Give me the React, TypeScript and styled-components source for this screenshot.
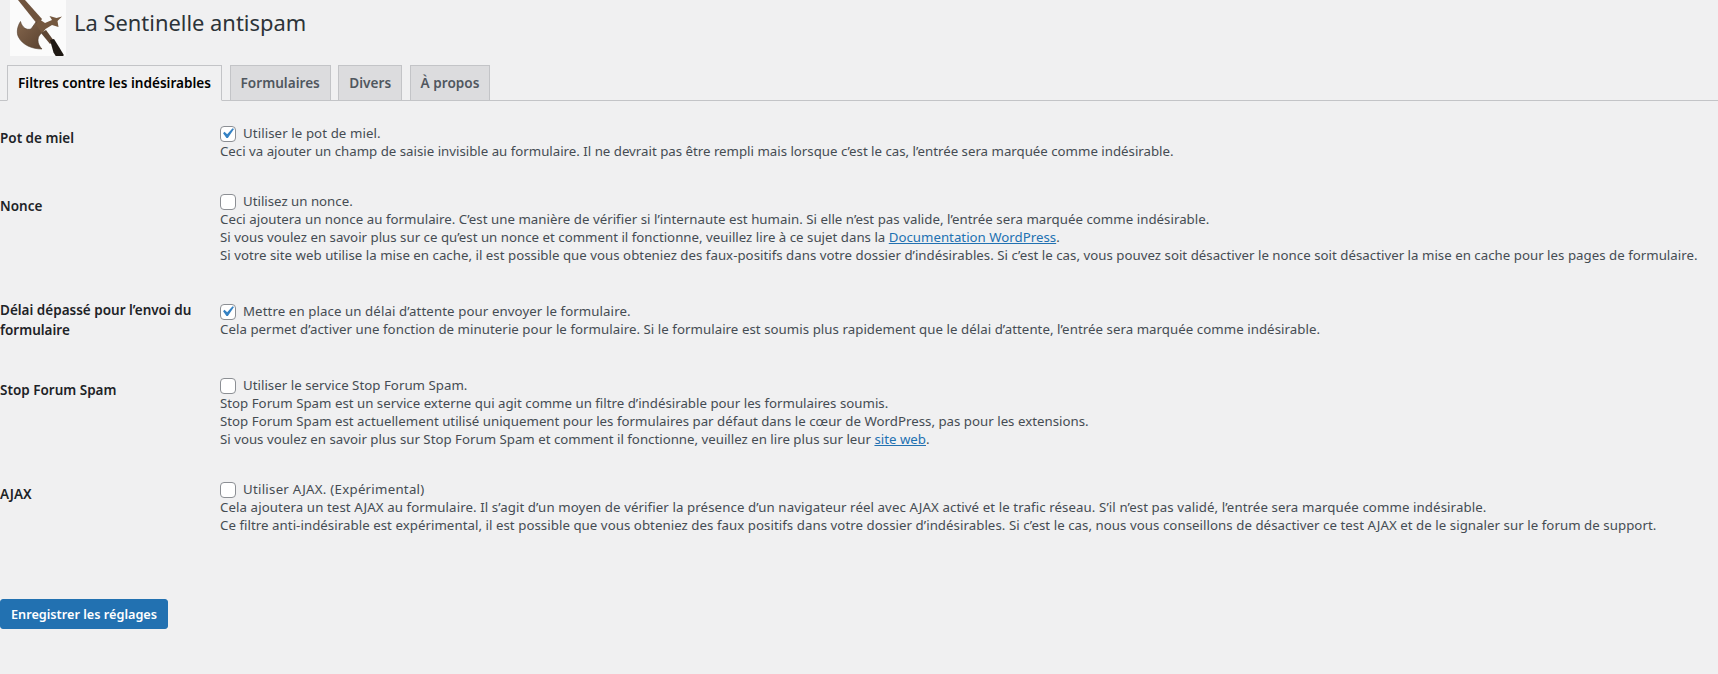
import React from "react";
import styled, { createGlobalStyle } from "styled-components";

const Global = createGlobalStyle`
  html, body { margin: 0; padding: 0; background: #f0f0f1; height: 100%; }
  body { font-family: "Noto Sans", "Open Sans", sans-serif; font-size: 13px; color: #3c434a; overflow: hidden; }
`;
const Page = styled.div`display: flex; flex-direction: column; width: 1718px; height: 674px;`;
const Header = styled.header`display: flex; align-items: flex-start; gap: 8px; padding-left: 10px; height: 65px;`;
const Logo = styled.svg`width: 56px; height: 56px; display: block;`;
const Title = styled.h1`margin: 8px 0 0; font-size: 21.9px; line-height: 30px; font-weight: 400; color: #2c3338;`;
const Tabs = styled.nav`display: flex; gap: 7.5px; padding-left: 7px; height: 35px; border-bottom: 1px solid #c3c4c7;`;
const Tab = styled.a<{ $active?: boolean }>`
  display: block; box-sizing: border-box; height: ${(p) => (p.$active ? 36 : 35)}px; padding: 0 10px; line-height: 34px;
  font-size: 13.6px; font-weight: 600; white-space: nowrap;
  border: 1px solid #c3c4c7; border-bottom: ${(p) => (p.$active ? "1px solid #f0f0f1" : "none")};
  background: ${(p) => (p.$active ? "#f0f0f1" : "#dcdcde")};
  color: ${(p) => (p.$active ? "#000" : "#50575e")};
`;
const Form = styled.form`display: flex; flex-direction: column; padding-top: 7px;`;
const Row = styled.section`display: grid; grid-template-columns: 220px 1fr;`;
const Label = styled.div`padding: 20px 10px 20px 0; font-size: 13.5px; line-height: 20px; font-weight: 600; color: #1d2327; width: 200px;`;
const Cell = styled.div`padding: 15px 0 16px; align-self: center; font-size: 13.25px; line-height: 18px; color: #454c53; white-space: nowrap;`;
const CheckLine = styled.label<{ $track?: number }>`display: flex; align-items: center; gap: 7px; height: 19px; letter-spacing: ${(p) => p.$track ?? 0}px;`;
const Box = styled.span`
  box-sizing: border-box; width: 16px; height: 16px; border: 1px solid #8c8f94; border-radius: 4px; background: #fff;
  display: flex; align-items: center; justify-content: center; flex: none; margin-top: 3px; overflow: visible;
`;
const CheckIcon = styled.svg`width: 21px; height: 21px; flex: none; margin: -1px 0 0 -1px;`;
const Line = styled.div<{ $track?: number }>`letter-spacing: ${(p) => p.$track ?? 0}px;`;
const Link = styled.a`color: #2271b1; text-decoration: underline;`;
const Footer = styled.div`padding-top: 49px;`;
const Save = styled.button`
  box-sizing: border-box; height: 30px; width: 168px; padding: 0; border: 1px solid #2271b1; border-radius: 3px;
  background: #2271b1; color: #fff; font: 600 12.7px/28px "Noto Sans", sans-serif;
`;

const Check = () => (
  <CheckIcon viewBox="0 0 20 20"><path d="M14.83 4.89l1.34.94-5.81 8.38H9.02L5.78 9.67l1.34-1.25 2.57 2.4z" fill="#3582c4" /></CheckIcon>
);

const Axe = () => (
  <Logo viewBox="0 0 56 56">
    <defs>
      <linearGradient id="axe" x1="0" y1="0" x2="1" y2="1">
        <stop offset="0" stopColor="#83654c" />
        <stop offset="1" stopColor="#59412f" />
      </linearGradient>
    </defs>
    <rect width="56" height="56" fill="#fbfbfb" />
    <path d="M8 0h7l17 19-4 6z" fill="#6f533d" />
    <path d="M10.5 21.5C7 27 6.5 33 8.5 37c4 8 13.500 12 23.500 12-4-4-5-9-3-13l4-5-7-9-5 7c-5 1.500-9-2-10.500-7.500z" fill="url(#axe)" stroke="#4f3a2a" strokeWidth=".6" />
    <path d="M29 19l6 4 7-3-2.500-4 7 2 5.500-1.500-4.500 4.500 1 6-6.500-2-6.500 4-3.500 4.500-6-9z" fill="#75583f" />
    <path d="M31 33l5-3 8 11-4 3z" fill="#5d4533" />
    <path d="M40 40l4-1 5 8 4.500 7.500v2h-7.500l-2.500-4z" fill="#1f1914" />
  </Logo>
);

const Opt = ({ on, track, children }: { on?: boolean; track?: number; children: React.ReactNode }) => (
  <CheckLine $track={track}><Box>{on && <Check />}</Box><span>{children}</span></CheckLine>
);

export default function App() {
  return (
    <Page>
      <Global />
      <Header><Axe /><Title>La Sentinelle antispam</Title></Header>
      <Tabs>
        <Tab $active>Filtres contre les indésirables</Tab>
        <Tab>Formulaires</Tab>
        <Tab>Divers</Tab>
        <Tab>À propos</Tab>
      </Tabs>
      <Form>
        <Row>
          <Label>Pot de miel</Label>
          <Cell>
            <Opt on track={0.09}>Utiliser le pot de miel.</Opt>
            <Line>Ceci va ajouter un champ de saisie invisible au formulaire. Il ne devrait pas être rempli mais lorsque c’est le cas, l’entrée sera marquée comme indésirable.</Line>
          </Cell>
        </Row>
        <Row>
          <Label>Nonce</Label>
          <Cell>
            <Opt>Utilisez un nonce.</Opt>
            <Line $track={0.033}>Ceci ajoutera un nonce au formulaire. C’est une manière de vérifier si l’internaute est humain. Si elle n’est pas valide, l’entrée sera marquée comme indésirable.</Line>
            <Line $track={0.012}>Si vous voulez en savoir plus sur ce qu’est un nonce et comment il fonctionne, veuillez lire à ce sujet dans la <Link>Documentation WordPress</Link>.</Line>
            <Line $track={0.022}>Si votre site web utilise la mise en cache, il est possible que vous obteniez des faux-positifs dans votre dossier d’indésirables. Si c’est le cas, vous pouvez soit désactiver le nonce soit désactiver la mise en cache pour les pages de formulaire.</Line>
          </Cell>
        </Row>
        <Row>
          <Label>Délai dépassé pour l’envoi du formulaire</Label>
          <Cell>
            <Opt on track={0.09}>Mettre en place un délai d’attente pour envoyer le formulaire.</Opt>
            <Line $track={0.05}>Cela permet d’activer une fonction de minuterie pour le formulaire. Si le formulaire est soumis plus rapidement que le délai d’attente, l’entrée sera marquée comme indésirable.</Line>
          </Cell>
        </Row>
        <Row>
          <Label>Stop Forum Spam</Label>
          <Cell>
            <Opt track={0.03}>Utiliser le service Stop Forum Spam.</Opt>
            <Line $track={0.01}>Stop Forum Spam est un service externe qui agit comme un filtre d’indésirable pour les formulaires soumis.</Line>
            <Line $track={0.016}>Stop Forum Spam est actuellement utilisé uniquement pour les formulaires par défaut dans le cœur de WordPress, pas pour les extensions.</Line>
            <Line $track={0.005}>Si vous voulez en savoir plus sur Stop Forum Spam et comment il fonctionne, veuillez en lire plus sur leur <Link>site web</Link>.</Line>
          </Cell>
        </Row>
        <Row>
          <Label>AJAX</Label>
          <Cell>
            <Opt track={0.26}>Utiliser AJAX. (Expérimental)</Opt>
            <Line $track={0.094}>Cela ajoutera un test AJAX au formulaire. Il s’agit d’un moyen de vérifier la présence d’un navigateur réel avec AJAX activé et le trafic réseau. S’il n’est pas validé, l’entrée sera marquée comme indésirable.</Line>
            <Line $track={0.05}>Ce filtre anti-indésirable est expérimental, il est possible que vous obteniez des faux positifs dans votre dossier d’indésirables. Si c’est le cas, nous vous conseillons de désactiver ce test AJAX et de le signaler sur le forum de support.</Line>
          </Cell>
        </Row>
        <Footer><Save type="button">Enregistrer les réglages</Save></Footer>
      </Form>
    </Page>
  );
}
